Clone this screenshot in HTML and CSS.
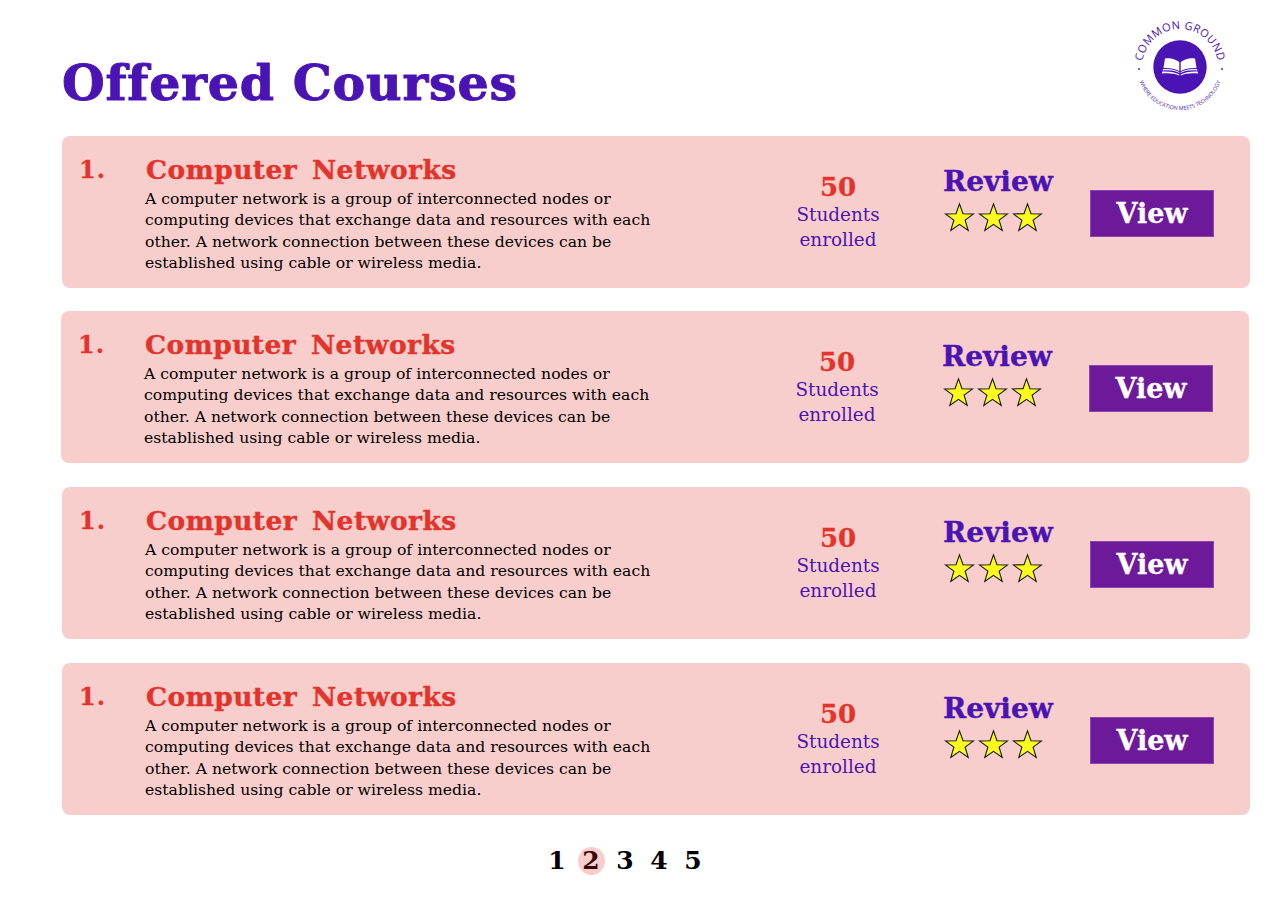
FILE: index.html
```html
<!DOCTYPE html>
<html lang="en">
<head>
<meta charset="utf-8">
<title>Offered Courses</title>
<link rel="stylesheet" href="styles.css">
</head>
<body>
<svg class="defs" width="0" height="0" aria-hidden="true">
  <defs>
    <symbol id="star" viewBox="0 0 32 30"><path d="M16 1.5 19.6 11.6 30.5 11.8 21.8 18.3 25 28.8 16 22.6 7 28.8 10.2 18.3 1.5 11.8 12.4 11.6Z" fill="#fbfb1e" stroke="#111" stroke-width="1.1" stroke-linejoin="miter"/></symbol>
  </defs>
</svg>
<main class="page">
  <header class="top">
    <h1 class="page-title">Offered Courses</h1>
    <svg class="logo" viewBox="0 0 100 100" role="img" aria-label="Common Ground logo">
      <defs>
        <path id="arc-top" d="M12 52A38 38 0 0 1 88 52"/>
        <path id="arc-bottom" d="M9 65A43 43 0 0 0 91 65"/>
      </defs>
      <text class="logo-top"><textPath href="#arc-top" startOffset="50%" text-anchor="middle">COMMON GROUND</textPath></text>
      <text class="logo-bottom"><textPath href="#arc-bottom" startOffset="50%" text-anchor="middle">WHERE EDUCATION MEETS TECHNOLOGY</textPath></text>
      <circle cx="9" cy="54" r="0.9" fill="#4a14b4"/>
      <circle cx="92" cy="54" r="0.9" fill="#4a14b4"/>
      <circle cx="50" cy="52" r="26.700" fill="#4a14b4"/>
      <path d="M49.300 47C45 43.500 39.500 42.500 35 43.500L33.500 53C39 52.500 45 53.500 49.300 56Z" fill="#fff"/>
      <path d="M50.700 47C55 43.500 60.500 42.500 65 43.500L66.500 53C61 52.500 55 53.500 50.700 56Z" fill="#fff"/>
      <path d="M33 54C39 53.500 45 54.500 49.300 57V58C45 55.500 39 55 32.700 55.500ZM67 54C61 53.500 55 54.500 50.700 57V58C55 55.500 61 55 67.300 55.500Z" fill="#fff"/>
      <path d="M32.300 56.500C39 56 45 57 49.300 59.500V60.500C45 58.500 39 58 32 58.500ZM67.700 56.500C61 56 55 57 50.700 59.500V60.500C55 58.500 61 58 68 58.500Z" fill="#fff"/>
    </svg>
  </header>

  <section class="course-list">
    <article class="course">
      <div class="course-num">1.</div>
      <div class="course-body">
        <h2 class="course-title">Computer Networks</h2>
        <p class="course-text">A computer network is a group of interconnected nodes or computing devices that exchange data and resources with each other. A network connection between these devices can be established using cable or wireless media.</p>
      </div>
      <div class="enrol"><strong class="enrol-count">50</strong><span>Students<br>enrolled</span></div>
      <div class="review"><div class="review-label">Review</div><div class="stars"><svg class="star"><use href="#star"/></svg><svg class="star"><use href="#star"/></svg><svg class="star"><use href="#star"/></svg></div></div>
      <a class="view-btn" href="#">View</a>
    </article>
    <article class="course course-shift">
      <div class="course-num">1.</div>
      <div class="course-body">
        <h2 class="course-title">Computer Networks</h2>
        <p class="course-text">A computer network is a group of interconnected nodes or computing devices that exchange data and resources with each other. A network connection between these devices can be established using cable or wireless media.</p>
      </div>
      <div class="enrol"><strong class="enrol-count">50</strong><span>Students<br>enrolled</span></div>
      <div class="review"><div class="review-label">Review</div><div class="stars"><svg class="star"><use href="#star"/></svg><svg class="star"><use href="#star"/></svg><svg class="star"><use href="#star"/></svg></div></div>
      <a class="view-btn" href="#">View</a>
    </article>
    <article class="course">
      <div class="course-num">1.</div>
      <div class="course-body">
        <h2 class="course-title">Computer Networks</h2>
        <p class="course-text">A computer network is a group of interconnected nodes or computing devices that exchange data and resources with each other. A network connection between these devices can be established using cable or wireless media.</p>
      </div>
      <div class="enrol"><strong class="enrol-count">50</strong><span>Students<br>enrolled</span></div>
      <div class="review"><div class="review-label">Review</div><div class="stars"><svg class="star"><use href="#star"/></svg><svg class="star"><use href="#star"/></svg><svg class="star"><use href="#star"/></svg></div></div>
      <a class="view-btn" href="#">View</a>
    </article>
    <article class="course">
      <div class="course-num">1.</div>
      <div class="course-body">
        <h2 class="course-title">Computer Networks</h2>
        <p class="course-text">A computer network is a group of interconnected nodes or computing devices that exchange data and resources with each other. A network connection between these devices can be established using cable or wireless media.</p>
      </div>
      <div class="enrol"><strong class="enrol-count">50</strong><span>Students<br>enrolled</span></div>
      <div class="review"><div class="review-label">Review</div><div class="stars"><svg class="star"><use href="#star"/></svg><svg class="star"><use href="#star"/></svg><svg class="star"><use href="#star"/></svg></div></div>
      <a class="view-btn" href="#">View</a>
    </article>
  </section>

  <nav class="pager">
    <a class="page-link" href="#">1</a>
    <a class="page-link is-current" href="#">2</a>
    <a class="page-link" href="#">3</a>
    <a class="page-link" href="#">4</a>
    <a class="page-link" href="#">5</a>
  </nav>
</main>
</body>
</html>
```
FILE: styles.css
```css
* { box-sizing: border-box; }
html, body { margin: 0; background: #fff; }
body { font-family: "DejaVu Serif", "Liberation Serif", serif; color: #000; }
.defs { position: absolute; }
.page { width: 1280px; height: 910px; padding: 15px 30px 0 62px; }
.top { display: flex; justify-content: space-between; align-items: flex-start; height: 121px; }
.page-title { margin: 35px 0 0; font-size: 49px; line-height: 66px; font-weight: 700; color: #4a14b4; letter-spacing: 0.8px; -webkit-text-stroke: 1px #4a14b4; }
.logo { width: 100px; height: 100px; margin-right: 20px; overflow: visible; }
.logo-top { font-family: "Open Sans", sans-serif; font-size: 11px; fill: #4a14b4; letter-spacing: 0.4px; }
.logo-bottom { font-family: "Open Sans", sans-serif; font-size: 5.400px; fill: #4a14b4; }
.course-list { display: flex; flex-direction: column; gap: 24px; }
.course { position: relative; display: flex; width: 1188px; height: 152px; background: #f8cecc; border-radius: 8px; padding: 20px 0 0 17px; }
.course-shift { margin-top: -1px; margin-left: -1px; }
.course-num { width: 66px; font-size: 24px; line-height: 28px; font-weight: 700; color: #e3342c; letter-spacing: 1px; -webkit-text-stroke: 0.3px #e3342c; }
.course-body { width: 600px; }
.course-title { margin: 0 0 0 1px; font-size: 26.500px; line-height: 28px; font-weight: 700; color: #e3342c; word-spacing: 5px; letter-spacing: 0.45px; -webkit-text-stroke: 0.4px #e3342c; }
.course-text { margin: 4px 0 0; width: 512px; font-size: 15.650px; line-height: 21.300px; color: #000; }
.enrol { width: 120px; margin-left: 33px; padding-top: 16px; text-align: center; font-size: 18.400px; line-height: 25px; color: #4a14b4; }
.enrol-count { display: block; font-size: 26px; line-height: 30px; color: #e3342c; -webkit-text-stroke: 0.3px #e3342c; }
.review { width: 147px; margin-left: 45px; }
.review-label { margin-top: 10px; font-size: 28px; line-height: 32px; font-weight: 700; color: #4a14b4; -webkit-text-stroke: 0.4px #4a14b4; }
.stars { display: flex; gap: 3px; margin: 4px 0 0 1px; }
.star { width: 31px; height: 30px; }
.view-btn { align-self: flex-start; display: block; width: 124px; height: 47px; margin-top: 34px; background: #6c1a9a; box-shadow: inset 0 0 0 1px #8a45ae; color: #fff; text-align: center; font-size: 27px; line-height: 48px; font-weight: 700; text-decoration: none; -webkit-text-stroke: 0.3px #fff; }
.pager { display: flex; justify-content: center; gap: 7px; margin: 32px 0 0 -62px; }
.page-link { width: 27px; height: 28px; border-radius: 50%; color: #000; text-align: center; font-size: 25px; line-height: 28px; font-weight: 700; text-decoration: none; }
.is-current { background: #f8cecc; color: #3a0a0a; }
```
